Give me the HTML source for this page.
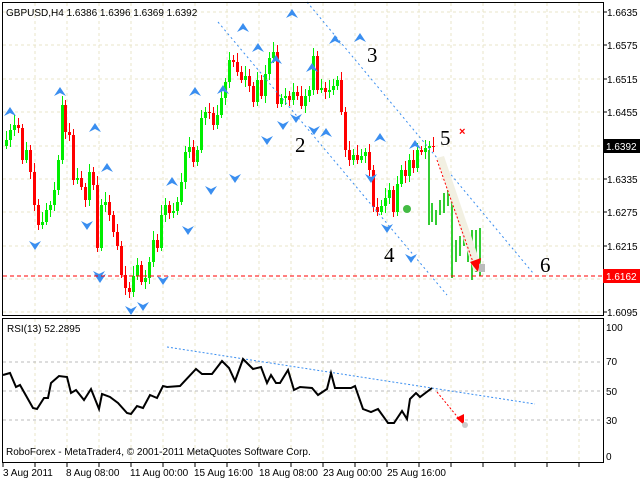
<!DOCTYPE html>
<html><head><meta charset="utf-8"><style>
html,body{margin:0;padding:0;background:#fff;width:640px;height:480px;overflow:hidden}
svg{display:block}
text{font-family:"Liberation Sans",sans-serif;font-size:10px;fill:#000}
.big{font-family:"Liberation Serif",serif;font-size:21px}
</style></head><body>
<svg id="s" width="640" height="480" xmlns="http://www.w3.org/2000/svg">
<rect x="0" y="0" width="640" height="480" fill="#fff"/>
<g id="grid" stroke="#e8e4c8" stroke-dasharray="3,3" stroke-width="1"></g>
<g id="candles"></g>
<g id="bars" fill="#33cc33"></g>
<g id="fr" fill="#3a8ef0"></g>
<!-- channel lines -->
<line x1="218" y1="22" x2="447" y2="295" stroke="#3a8ef0" stroke-dasharray="2,3"/>
<line x1="307" y1="2" x2="533" y2="273" stroke="#3a8ef0" stroke-dasharray="2,3"/>
<!-- red support -->
<line x1="3" y1="276" x2="603" y2="276" stroke="#f00" stroke-dasharray="4,3"/>
<!-- forecast arrow -->
<polygon points="437,158 444,156 482,268 474,272" fill="#f2f0e2"/>
<line x1="437" y1="160" x2="474" y2="265" stroke="#f00" stroke-dasharray="2,2"/>
<polygon points="470,262 481,258 478,272" fill="#f00"/>
<rect x="479" y="264" width="6" height="8" fill="#bbb"/>
<circle cx="407" cy="209" r="4" fill="#44bb44"/>
<text class="big" x="367" y="62">3</text>
<text class="big" x="295" y="152">2</text>
<text class="big" x="440" y="145">5</text>
<text class="big" x="384" y="262">4</text>
<text class="big" x="540" y="272">6</text>
<text x="459" y="135" style="fill:#f00;font-size:11px;font-weight:bold">×</text>
<text x="6" y="16">GBPUSD,H4  1.6386 1.6396 1.6369 1.6392</text>
<!-- frames -->
<rect x="2.5" y="2.5" width="601" height="313" fill="none" stroke="#000"/>
<rect x="2.5" y="318.5" width="601" height="144" fill="none" stroke="#000"/>
<g id="axis"></g>
<rect x="603" y="139" width="37" height="14" fill="#000"/>
<text x="606" y="150" style="fill:#fff">1.6392</text>
<rect x="603" y="269" width="37" height="14" fill="#f00"/>
<text x="606" y="280" style="fill:#fff">1.6162</text>
<!-- RSI -->
<g stroke="#bbb" stroke-dasharray="3,3"><line x1="3" y1="362" x2="603" y2="362"/><line x1="3" y1="391" x2="603" y2="391"/><line x1="3" y1="420" x2="603" y2="420"/></g>
<line x1="167" y1="347" x2="535" y2="404" stroke="#3a8ef0" stroke-dasharray="2,2"/>
<polyline fill="none" stroke="#000" stroke-width="2" points="3,375 10,373 16,387 20,385 33,408 37,409 44,398 48,398 51,383 59,376 67,377 71,393 76,390 84,400 91,389 99,409 102,394 110,397 118,403 127,413 131,414 137,406 143,408 150,395 157,398 163,386 167,387 180,386 196,369 202,374 212,374 222,361 229,368 235,381 243,359 249,365 253,369 261,367 267,383 271,375 276,383 280,383 288,370 294,390 300,387 312,388 318,395 327,389 331,373 335,388 351,388 355,386 363,409 371,412 378,409 388,423 394,423 402,411 407,419 410,399 416,393 420,397 432,388"/>
<line x1="437" y1="392" x2="460" y2="420" stroke="#f00" stroke-dasharray="2,2"/>
<polygon points="456,418 464,414 464,425" fill="#f00"/>
<circle cx="465" cy="425" r="3" fill="#ccc"/>
<text x="7" y="332">RSI(13) 52.2895</text>
<text x="6" y="455">RoboForex - MetaTrader4, © 2001-2011 MetaQuotes Software Corp.</text>
<text x="606" y="331">100</text><text x="606" y="365">70</text><text x="606" y="395">50</text><text x="606" y="424">30</text><text x="606" y="460">0</text>
<g id="xt"></g>
<text x="3" y="476">3 Aug 2011</text><text x="66" y="476">8 Aug 08:00</text><text x="130" y="476">11 Aug 00:00</text><text x="194" y="476">15 Aug 16:00</text><text x="259" y="476">18 Aug 08:00</text><text x="323" y="476">23 Aug 00:00</text><text x="387" y="476">25 Aug 16:00</text>
</svg>
<script>
var NS="http://www.w3.org/2000/svg";
function el(p,t,a){var e=document.createElementNS(NS,t);for(var k in a)e.setAttribute(k,a[k]);document.getElementById(p).appendChild(e);return e;}
var ys=[12,45,79,112,146,179,212,246,279,312];
ys.forEach(function(y){el("grid","line",{x1:3,y1:y,x2:603,y2:y});});
for(var x=35;x<603;x+=32){el("grid","line",{x1:x,y1:3,x2:x,y2:315});el("grid","line",{x1:x,y1:319,x2:x,y2:462});}
var labels=["1.6635","1.6575","1.6515","1.6455","","1.6335","1.6275","1.6215","","1.6095"];
ys.forEach(function(y,i){el("axis","line",{x1:603,y1:y,x2:607,y2:y,stroke:"#000"});if(labels[i]){var t=el("axis","text",{x:607,y:y+4});t.textContent=labels[i];}});
for(var x=3;x<603;x+=32)el("xt","line",{x1:x,y1:463,x2:x,y2:467,stroke:"#000"});
var pts=[[5,140],[9,130],[13,125],[17,128],[21,160],[25,150],[29,172],[33,205],[37,225],[41,222],[45,210],[49,205],[53,190],[57,160],[61,105],[64,132],[68,135],[72,180],[76,178],[80,187],[84,200],[88,172],[92,185],[96,248],[100,205],[104,202],[108,215],[112,232],[116,246],[120,275],[124,288],[128,292],[132,276],[136,265],[140,282],[144,278],[148,262],[152,240],[156,248],[160,215],[164,205],[168,213],[172,211],[176,202],[180,182],[184,152],[188,147],[192,162],[196,150],[200,118],[204,112],[208,113],[212,125],[216,115],[220,98],[224,82],[228,60],[232,62],[236,72],[240,80],[244,76],[248,86],[252,102],[256,80],[260,96],[264,74],[268,58],[272,52],[276,104],[280,98],[284,96],[288,100],[292,92],[296,96],[300,106],[304,96],[308,90],[312,56],[316,90],[320,88],[324,92],[328,90],[332,86],[336,80],[340,112],[344,150],[348,160],[352,155],[356,160],[360,156],[364,152],[368,170],[372,207],[376,212],[380,206],[384,198],[388,190],[392,212],[396,184],[400,170],[404,176],[408,160],[412,168],[416,150],[420,152],[424,148],[428,146],[432,147]];
var prev=pts[0][1]+6;
pts.forEach(function(p){var x=p[0],c=p[1],o=prev;var up=c<o;var col=up?"#00ee00":"#ff0000";var top=Math.min(o,c),bot=Math.max(o,c);if(bot-top<1)bot=top+1;
el("candles","line",{x1:x+1.5,y1:top-4-(x%7),x2:x+1.5,y2:bot+3+(x%5),stroke:col});
el("candles","rect",{x:x,y:top,width:3,height:bot-top,fill:col});prev=c;});
var bars=[[428,150,225],[431,203,222],[435,210,225],[439,200,215],[443,193,213],[447,190,206],[451,190,278],[455,240,262],[459,236,256],[463,232,246],[467,230,262],[471,230,280],[475,230,272],[479,228,276]];
bars.forEach(function(b){el("bars","rect",{x:b[0],y:b[1],width:2,height:b[2]-b[1]});});
var up=[[10,112],[60,92],[95,128],[107,168],[172,182],[195,92],[223,90],[243,28],[258,48],[276,60],[292,14],[312,68],[335,40],[360,38],[380,138],[415,145],[326,133]];
var dn=[[35,245],[87,225],[99,275],[131,310],[143,306],[163,280],[188,230],[211,190],[235,178],[267,140],[283,125],[296,118],[314,130],[371,178],[387,228],[411,258],[100,278]];
up.forEach(function(p){el("fr","polygon",{points:(p[0]-6)+","+(p[1]+4)+" "+p[0]+","+(p[1]-5)+" "+(p[0]+6)+","+(p[1]+4)+" "+p[0]+","+(p[1]+1)});});
dn.forEach(function(p){el("fr","polygon",{points:(p[0]-6)+","+(p[1]-4)+" "+p[0]+","+(p[1]+5)+" "+(p[0]+6)+","+(p[1]-4)+" "+p[0]+","+(p[1]-1)});});
</script>
</body></html>
